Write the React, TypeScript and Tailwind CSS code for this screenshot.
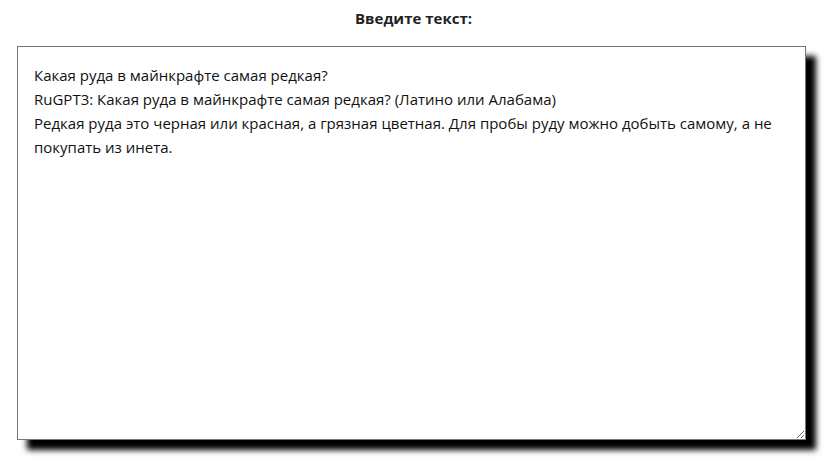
import React from "react";

const TEXT =
  "Какая руда в майнкрафте самая редкая?\nRuGPT3: Какая руда в майнкрафте самая редкая? (Латино или Алабама)\nРедкая руда это черная или красная, а грязная цветная. Для пробы руду можно добыть самому, а не покупать из инета.";

export default function App() {
  return (
    <div className="w-[827px] h-[458px] bg-white font-['Open_Sans',sans-serif] text-[#222]">
      <div className="pt-[8px] h-[46px] text-center text-[15px] font-bold leading-[20px] text-[#222]">
        Введите текст:
      </div>
      <div className="pl-[17px]">
        <textarea
          readOnly
          defaultValue={TEXT}
          className="block w-[789px] h-[394px] border border-[#767676] bg-white px-[16px] py-[16px] text-[15px] leading-[24px] text-[#111] shadow-[10px_10px_6px_#000] outline-none resize"
        />
      </div>
    </div>
  );
}
